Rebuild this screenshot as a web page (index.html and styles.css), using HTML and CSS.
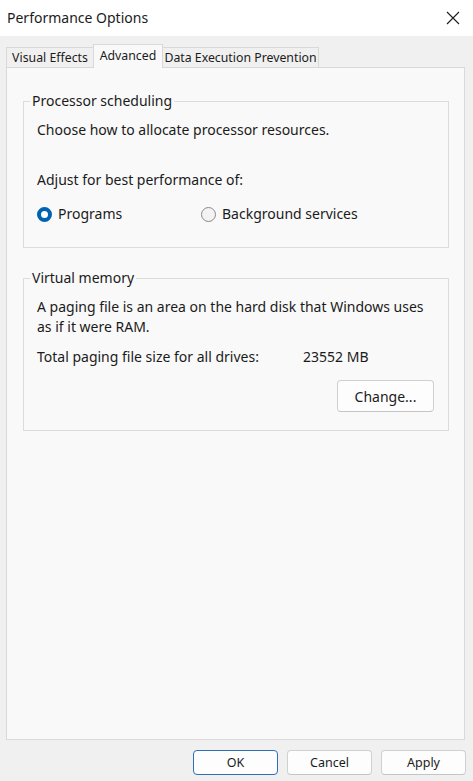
FILE: index.html
```html
<!DOCTYPE html>
<html lang="en">
<head>
<meta charset="utf-8">
<title>Performance Options</title>
<link rel="stylesheet" href="styles.css">
</head>
<body>
<div class="window">
  <div class="titlebar">
    <span class="title">Performance Options</span>
    <span class="close" aria-label="Close">
      <svg width="14" height="14" viewBox="0 0 14 14"><path d="M1 1 L13 13 M13 1 L1 13" stroke="#1b1b1b" stroke-width="1.1" fill="none"/></svg>
    </span>
  </div>
  <div class="tabs">
    <div class="tab t1">Visual Effects</div>
    <div class="tab t2 active">Advanced</div>
    <div class="tab t3">Data Execution Prevention</div>
  </div>
  <div class="panel">
    <fieldset class="group g1">
      <legend>Processor scheduling</legend>
      <p class="line">Choose how to allocate processor resources.</p>
      <p class="line adjust">Adjust for best performance of:</p>
      <div class="radios">
        <label class="radio r1"><span class="dot on"></span>Programs</label>
        <label class="radio r2"><span class="dot"></span>Background services</label>
      </div>
    </fieldset>
    <fieldset class="group g2">
      <legend>Virtual memory</legend>
      <p class="line">A paging file is an area on the hard disk that Windows uses<br>as if it were RAM.</p>
      <div class="total"><span class="tlabel">Total paging file size for all drives:</span><span class="tval">23552 MB</span></div>
      <div class="changerow"><button class="btn change">Change...</button></div>
    </fieldset>
  </div>
  <div class="footer">
    <button class="btn fb ok">OK</button>
    <button class="btn fb">Cancel</button>
    <button class="btn fb">Apply</button>
  </div>
</div>
</body>
</html>
```
FILE: styles.css
```css
* { box-sizing: border-box; }
html, body { margin: 0; padding: 0; }
body {
  font-family: "Segoe UI", "Noto Sans", "Open Sans", sans-serif;
  color: #1b1b1b;
  background: #f0f0f0;
}
.window {
  width: 473px;
  height: 781px;
  background: #f0f0f0;
  display: flex;
  flex-direction: column;
}
.titlebar {
  height: 36px;
  background: #ffffff;
  display: flex;
  align-items: center;
  justify-content: space-between;
  padding: 0 13px 0 7px;
}
.title { font-size: 14px; line-height: 20px; padding-bottom: 1px; }
.close { display: flex; width: 14px; height: 14px; }
.tabs {
  height: 31px;
  display: flex;
  align-items: flex-end;
  padding-left: 6px;
}
.tab {
  height: 20px;
  font-size: 12.3px;
  line-height: 19px;
  border: 1px solid #d9d9d9;
  border-bottom: none;
  background: #f0f0f0;
  text-align: center;
}
.t1 { width: 88px; }
.t2 { width: 70px; margin-left: -1px; }
.t3 { width: 157px; margin-left: -1px; }
.tab.active {
  height: 24px;
  line-height: 21px;
  background: #f9f9f9;
  margin-bottom: -1px;
  position: relative;
  z-index: 1;
}
.panel {
  height: 673px;
  margin: 0 8px 0 6px;
  background: #f9f9f9;
  border: 1px solid #d9d9d9;
  padding: 0 15px 0 16px;
}
.group {
  margin: 0;
  border: 1px solid #dcdcdc;
  padding: 9px 13px 0 13px;
  min-width: 0;
}
.group legend {
  font-size: 14px;
  line-height: 20px;
  padding: 0 2px;
  margin-left: -7px;
}
.g1 { margin-top: 23px; padding-bottom: 23px; }
.g2 { margin-top: 20px; padding-bottom: 18px; }
.line {
  margin: 0;
  font-size: 14px;
  line-height: 20px;
}
.adjust { margin-top: 30px; }
.radios {
  display: flex;
  margin-top: 14px;
  height: 20px;
  align-items: center;
}
.radio {
  display: flex;
  align-items: center;
  font-size: 14px;
  line-height: 20px;
}
.r1 { width: 164px; }
.dot {
  width: 15px;
  height: 15px;
  border-radius: 50%;
  border: 1px solid #8a8a8a;
  background: #f3f3f3;
  margin-right: 6px;
  flex: none;
}
.dot.on {
  border: 4px solid #0063b1;
  background: #ffffff;
}
.total {
  display: flex;
  margin-top: 10px;
  font-size: 14px;
  line-height: 20px;
}
.tlabel { width: 266px; }
.changerow {
  display: flex;
  justify-content: flex-end;
  margin-top: 13px;
  padding-right: 1px;
}
.btn {
  font-family: inherit;
  color: #1b1b1b;
  background: #fdfdfd;
  border: 1px solid #d0d0d0;
  border-bottom-color: #c4c4c4;
  border-radius: 4px;
  padding: 0;
}
.change {
  width: 97px;
  height: 32px;
  font-size: 14px;
}
.footer {
  display: flex;
  justify-content: flex-end;
  gap: 10px;
  padding: 10px 7px 0 0;
}
.fb {
  width: 85px;
  height: 25px;
  font-size: 12.5px;
}
.fb + .fb { margin-left: -1px; }
.ok { border: 1px solid #2f6fb5; }
```
